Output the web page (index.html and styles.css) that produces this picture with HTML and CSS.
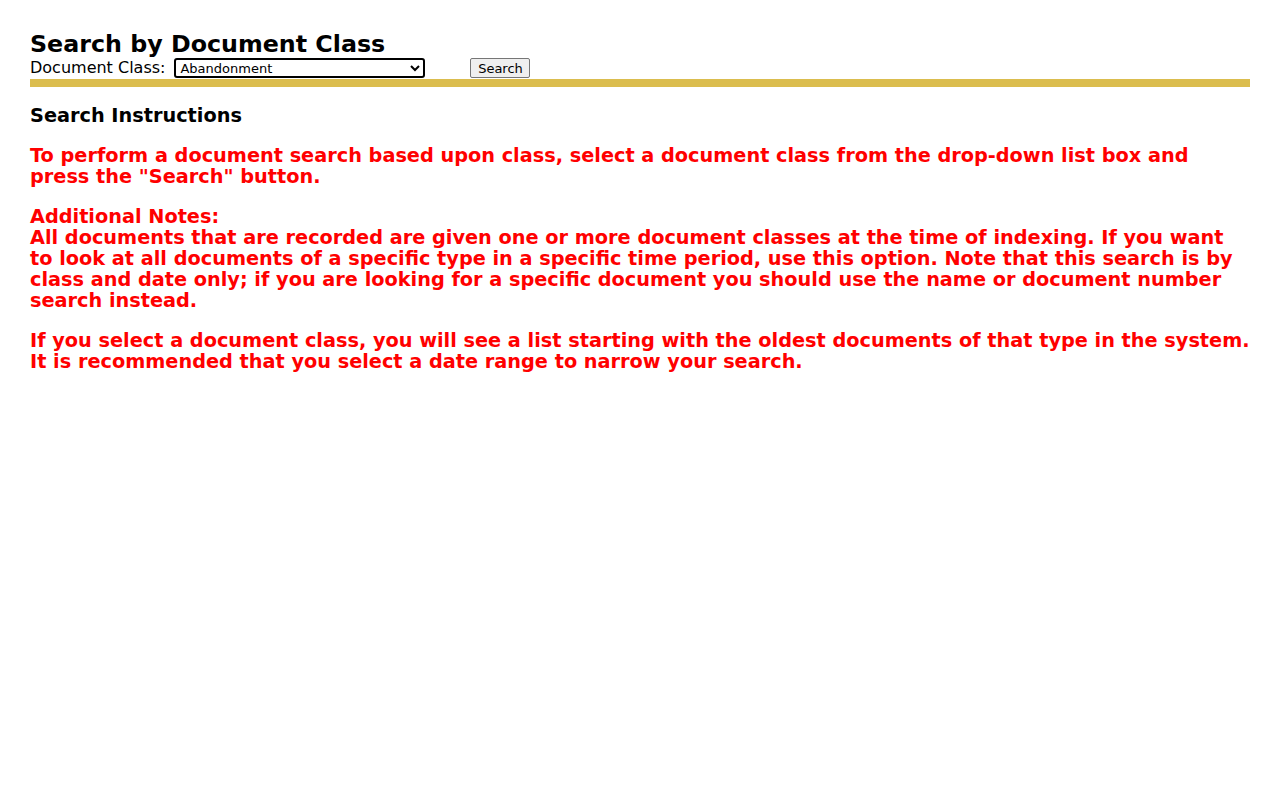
FILE: index.html
```html
<!DOCTYPE html>
<html>
<head>
<meta charset="utf-8">
<title>Search by Document Class</title>
<link rel="stylesheet" href="styles.css">
</head>
<body>
<div class="page">
  <h1 class="title">Search by Document Class</h1>
  <form class="search-row">
    <label class="field-label" for="docclass">Document Class:</label>
    <select id="docclass" class="class-select">
      <option>Abandonment</option>
    </select>
    <button type="button" class="search-btn">Search</button>
  </form>
  <div class="rule"></div>
  <h3 class="section-title">Search Instructions</h3>
  <p class="note">To perform a document search based upon class, select a document class from the drop-down list box and press the "Search" button.</p>
  <p class="note">Additional Notes:<br>All documents that are recorded are given one or more document classes at the time of indexing. If you want to look at all documents of a specific type in a specific time period, use this option. Note that this search is by class and date only; if you are looking for a specific document you should use the name or document number search instead.</p>
  <p class="note">If you select a document class, you will see a list starting with the oldest documents of that type in the system. It is recommended that you select a date range to narrow your search.</p>
</div>
</body>
</html>
```
FILE: styles.css
```css
html, body {
  margin: 0;
  padding: 0;
  background: #fff;
}
body {
  font-family: "DejaVu Sans", Verdana, sans-serif;
  color: #000;
}
.page {
  padding: 30px 30px;
}
.title {
  font-size: 23.75px;
  font-weight: bold;
  line-height: 28px;
  margin: 0;
}
.search-row {
  display: flex;
  align-items: center;
  height: 20px;
  margin: 0;
}
.field-label {
  font-size: 16px;
  line-height: 20px;
  margin-right: 9px;
}
.class-select {
  width: 251px;
  height: 20px;
  font-family: "DejaVu Sans", Verdana, sans-serif;
  font-size: 13px;
  border: 2px solid #000;
  border-radius: 3px;
  background: #fff;
  color: #000;
  padding: 0;
  margin-right: 45px;
}
.search-btn {
  height: 20px;
  width: 60px;
  padding: 0;
  font-family: "DejaVu Sans", Verdana, sans-serif;
  font-size: 13px;
  color: #000;
  background: #efefef;
  border: 1px solid #767676;
  border-radius: 2px;
}
.rule {
  height: 8px;
  background: #dbbd4e;
  margin-top: 1px;
}
.section-title {
  font-size: 19.3px;
  font-weight: bold;
  line-height: 21px;
  margin: 18px 0 19px;
}
.note {
  color: #ff0000;
  font-size: 19.3px;
  font-weight: bold;
  line-height: 21px;
  margin: 19px 0;
}
```
